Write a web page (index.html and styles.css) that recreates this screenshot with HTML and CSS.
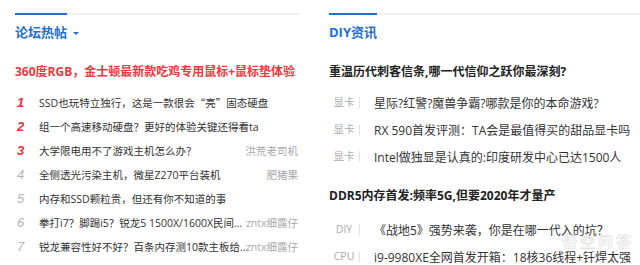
FILE: index.html
```html
<!DOCTYPE html>
<html lang="zh-CN">
<head>
    <meta charset="UTF-8">
    <title>论坛热帖 / DIY资讯</title>
    <link rel="stylesheet" href="styles.css">
</head>
<body>
    <div class="page">
        <!-- left column: forum hot posts -->
        <section class="panel forum">
            <div class="panel-head">
                <span class="panel-title">论坛热帖</span><span class="caret"></span>
            </div>
            <a class="hot-headline" href="#">360度RGB，金士顿最新款吃鸡专用鼠标+鼠标垫体验</a>
            <ol class="hot-list">
                <li class="top"><i class="num">1</i><span class="post">SSD也玩特立独行，这是一款很会<span class="cjk">“</span>亮<span class="cjk">”</span>固态硬盘</span></li>
                <li class="top"><i class="num">2</i><span class="post">组一个高速移动硬盘？更好的体验关键还得看ta</span></li>
                <li class="top"><i class="num">3</i><span class="post">大学限电用不了游戏主机怎么办？</span><span class="author">洪荒老司机</span></li>
                <li><i class="num">4</i><span class="post">全侧透光污染主机，微星Z270平台装机</span><span class="author">肥猪果</span></li>
                <li><i class="num">5</i><span class="post">内存和SSD颗粒贵，但还有你不知道的事</span></li>
                <li><i class="num">6</i><span class="post">拳打i7？脚踢i5？锐龙5 1500X/1600X民间...</span><span class="author">zntx细露仔</span></li>
                <li><i class="num">7</i><span class="post">锐龙兼容性好不好？百条内存测10款主板给...</span><span class="author">zntx细露仔</span></li>
            </ol>
        </section>

        <!-- right column: DIY news -->
        <section class="panel news">
            <div class="panel-head">
                <span class="panel-title">DIY资讯</span>
            </div>
            <a class="news-headline" href="#">重温历代刺客信条,哪一代信仰之跃你最深刻?</a>
            <ul class="news-list">
                <li><span class="tag">显卡</span><span class="news-title">星际?红警?魔兽争霸?哪款是你的本命游戏?</span></li>
                <li><span class="tag">显卡</span><span class="news-title">RX 590首发评测：TA会是最值得买的甜品显卡吗</span></li>
                <li><span class="tag">显卡</span><span class="news-title">Intel做独显是认真的:印度研发中心已达1500人</span></li>
            </ul>
            <a class="news-headline second" href="#">DDR5内存首发:频率5G,但要2020年才量产</a>
            <ul class="news-list">
                <li><span class="tag">DIY</span><span class="news-title">《战地5》强势来袭，你是在哪一代入的坑？</span></li>
                <li><span class="tag">CPU</span><span class="news-title">i9-9980XE全网首发开箱：18核36线程+钎焊太强</span></li>
            </ul>
        </section>
    </div>
    <div class="watermark">悟空问答</div>
</body>
</html>
```

FILE: styles.css
```css
body {
    margin: 0;
    background: #fff;
    font-family: "Open Sans", "Noto Sans CJK SC", sans-serif;
    color: #333;
    overflow: hidden;
}
a {
    text-decoration: none;
}
.page {
    display: grid;
    grid-template-columns: 285px 1fr;
    column-gap: 29px;
    padding: 13px 0 0 15px;
}
.panel-head {
    border-top: 2px solid #f0f0f0;
    line-height: 18px;
    height: 26px;
}
.panel-title {
    display: inline-block;
    margin-top: -2px;
    border-top: 2px solid #1f6fd6;
    padding-top: 8px;
    font-size: 13px;
    font-weight: bold;
    color: #1f6fd6;
}
/* little dropdown triangle next to the forum title */
.caret {
    display: inline-block;
    margin-left: 6px;
    vertical-align: 2px;
    border-left: 3px solid transparent;
    border-right: 3px solid transparent;
    border-top: 3px solid #1f6fd6;
}
.hot-headline {
    display: block;
    margin-top: 21px;
    line-height: 20px;
    font-size: 12px;
    font-weight: bold;
    color: #f0373d;
    white-space: nowrap;
}
.hot-list {
    list-style: none;
    margin: 8px 0 0;
    padding: 0;
}
.hot-list li {
    display: flex;
    align-items: center;
    height: 24px;
    font-size: 10.5px;
}
.num {
    width: 22px;
    flex: none;
    padding-left: 2px;
    font-family: "Liberation Sans", sans-serif;
    font-size: 13px;
    color: #b5b5b5;
}
.top .num {
    color: #e8333c;
    font-weight: bold;
}
.post {
    flex: 1;
    min-width: 0;
    white-space: nowrap;
    color: #333;
}
.cjk {
    font-family: "Noto Sans CJK SC", sans-serif;
}
.author {
    flex: none;
    margin-left: 4px;
    margin-right: 2px;
    color: #a8a8a8;
}
.news-headline {
    display: block;
    margin-top: 21px;
    line-height: 20px;
    font-size: 12px;
    font-weight: bold;
    color: #222;
    white-space: nowrap;
}
.news-headline.second {
    margin-top: 16px;
}
.news-list {
    list-style: none;
    margin: 7px 0 0;
    padding: 0;
}
.news-headline.second + .news-list {
    margin-top: 10px;
}
.news-list li {
    display: flex;
    align-items: center;
    height: 27px;
    white-space: nowrap;
}
.tag {
    width: 30px;
    flex: none;
    text-align: center;
    font-size: 10.5px;
    color: #aaa;
    border-right: 1px solid #e2e2e2;
    line-height: 11px;
    margin-right: 14px;
}
.news-title {
    font-size: 12px;
    color: #333;
}
.watermark {
    position: absolute;
    right: 6px;
    bottom: 14px;
    font-family: "Noto Sans CJK SC", sans-serif;
    font-size: 15px;
    font-weight: bold;
    letter-spacing: 3px;
    color: rgba(255, 255, 255, 0.55);
    -webkit-text-stroke: 0.6px rgba(150, 150, 150, 0.35);
}
```
